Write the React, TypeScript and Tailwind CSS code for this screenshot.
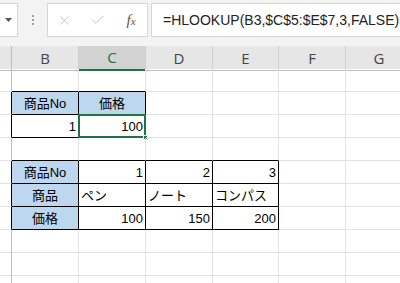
import { X, Check } from 'lucide-react';

const COLS = ['B', 'C', 'D', 'E', 'F', 'G'];
const ROWS = 10;

type Cell = { text?: string; align?: 'left' | 'center' | 'right'; fill?: boolean; table?: boolean };

// sheet content, keyed by "row-col"
const DATA: Record<string, Cell> = {
  '2-B': { text: '商品No', align: 'center', fill: true, table: true },
  '2-C': { text: '価格', align: 'center', fill: true, table: true },
  '3-B': { text: '1', align: 'right', table: true },
  '3-C': { text: '100', align: 'right', table: true },
  '5-B': { text: '商品No', align: 'center', fill: true, table: true },
  '5-C': { text: '1', align: 'right', table: true },
  '5-D': { text: '2', align: 'right', table: true },
  '5-E': { text: '3', align: 'right', table: true },
  '6-B': { text: '商品', align: 'center', fill: true, table: true },
  '6-C': { text: 'ペン', align: 'left', table: true },
  '6-D': { text: 'ノート', align: 'left', table: true },
  '6-E': { text: 'コンパス', align: 'left', table: true },
  '7-B': { text: '価格', align: 'center', fill: true, table: true },
  '7-C': { text: '100', align: 'right', table: true },
  '7-D': { text: '150', align: 'right', table: true },
  '7-E': { text: '200', align: 'right', table: true },
};

const isTable = (r: number, c: string) => !!DATA[`${r}-${c}`]?.table;

function FormulaBar() {
  return (
    <div className="h-[46px] bg-[#f3f3f3] flex items-start pt-[3px]">
      {/* name box, cut off on the left */}
      <div className="w-[18px] h-[34px] bg-white border border-l-0 border-[#d6d6d6] flex items-center justify-center">
        <svg width="7" height="4" viewBox="0 0 7 4"><path d="M0 0h7L3.5 4z" fill="#555" /></svg>
      </div>
      <div className="w-[29px] h-[34px] flex flex-col items-center justify-center gap-[2px]">
        <span className="w-[2px] h-[2px] bg-[#a0a0a0]" />
        <span className="w-[2px] h-[2px] bg-[#a0a0a0]" />
        <span className="w-[2px] h-[2px] bg-[#a0a0a0]" />
      </div>
      <div className="w-[101px] h-[34px] bg-white border border-[#d6d6d6] flex items-center">
        <div className="w-[33px] flex justify-center"><X size={15} strokeWidth={1.3} className="text-[#b8b8b8]" /></div>
        <div className="w-[34px] flex justify-center"><Check size={16} strokeWidth={1.3} className="text-[#b8b8b8]" /></div>
        <div className="w-[32px] flex justify-center">
          <span className="text-[15px] italic text-[#555] leading-none" style={{ fontFamily: '"Liberation Serif", serif' }}>
            f<span className="text-[11px]">x</span>
          </span>
        </div>
      </div>
      <div className="ml-[3px] flex-1 h-[34px] bg-white border border-r-0 border-[#d6d6d6] flex items-center pl-[11px] overflow-hidden">
        <span className="text-[14px] text-[#222] whitespace-nowrap" style={{ fontFamily: '"Liberation Sans", "Noto Sans CJK JP", sans-serif' }}>
          =HLOOKUP(B3,$C$5:$E$7,3,FALSE)
        </span>
      </div>
    </div>
  );
}

export default function App() {
  const gridCols = 'grid grid-cols-[12px_67px_67px_67px_66px_67px_67px]';
  return (
    <div className="w-[400px] h-[283px] overflow-hidden bg-white" style={{ fontFamily: '"Liberation Sans", "Noto Sans CJK JP", sans-serif' }}>
      <FormulaBar />

      {/* column headers */}
      <div className={`${gridCols} h-[23px] bg-[#e6e6e6]`}>
        <div className="border-r border-b border-[#bdbdbd]" />
        {COLS.map(c => (
          <div
            key={c}
            className={`flex items-center justify-center text-[15px] border-r border-[#cfcfcf] ${
              c === 'C' ? 'bg-[#d2d2d2] text-[#217346] border-b-2 border-b-[#217346]' : 'text-[#444] border-b border-b-[#bdbdbd]'
            }`}
            style={{ fontFamily: '"Open Sans", sans-serif' }}
          >
            {c}
          </div>
        ))}
      </div>

      {/* cells */}
      {Array.from({ length: ROWS }, (_, i) => i + 1).map(r => (
        <div key={r} className={`${gridCols} h-[23px]`}>
          <div className={`border-b border-[#e1e1e1] border-r ${isTable(r, 'B') ? 'border-r-black' : 'border-r-[#bdbdbd]'}`} />
          {COLS.map((c, ci) => {
            const cell = DATA[`${r}-${c}`];
            const right = cell?.table || isTable(r, COLS[ci + 1]);
            const bottom = cell?.table || isTable(r + 1, c);
            const active = r === 3 && c === 'C';
            return (
              <div
                key={c}
                className={`relative flex items-center px-[2px] text-[13px] text-black border-r border-b ${
                  right ? 'border-r-black' : 'border-r-[#e1e1e1]'
                } ${bottom ? 'border-b-black' : 'border-b-[#e1e1e1]'} ${cell?.fill ? 'bg-[#bdd7ee]' : ''} ${
                  cell?.align === 'center' ? 'justify-center' : cell?.align === 'right' ? 'justify-end' : 'justify-start'
                }`}
              >
                <span className="leading-none pt-[1px]">{cell?.text}</span>
                {active && (
                  <>
                    <div className="absolute -left-[1px] -top-[1px] -right-[1px] -bottom-[1px] border-2 border-[#217346]" />
                    <div className="absolute -right-[3px] -bottom-[3px] w-[5px] h-[5px] bg-[#217346] border border-white" />
                  </>
                )}
              </div>
            );
          })}
        </div>
      ))}
    </div>
  );
}
